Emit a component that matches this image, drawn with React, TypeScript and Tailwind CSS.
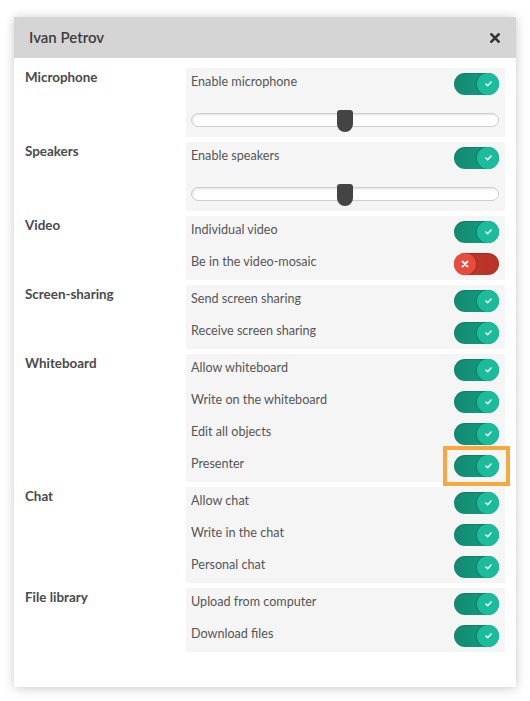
import React from "react";

type Row = { label: string; on: boolean; highlight?: boolean };
type Section = { title: string; rows: Row[]; slider?: boolean };

const sections: Section[] = [
  { title: "Microphone", rows: [{ label: "Enable microphone", on: true }], slider: true },
  { title: "Speakers", rows: [{ label: "Enable speakers", on: true }], slider: true },
  {
    title: "Video",
    rows: [
      { label: "Individual video", on: true },
      { label: "Be in the video-mosaic", on: false },
    ],
  },
  {
    title: "Screen-sharing",
    rows: [
      { label: "Send screen sharing", on: true },
      { label: "Receive screen sharing", on: true },
    ],
  },
  {
    title: "Whiteboard",
    rows: [
      { label: "Allow whiteboard", on: true },
      { label: "Write on the whiteboard", on: true },
      { label: "Edit all objects", on: true },
      { label: "Presenter", on: true, highlight: true },
    ],
  },
  {
    title: "Chat",
    rows: [
      { label: "Allow chat", on: true },
      { label: "Write in the chat", on: true },
      { label: "Personal chat", on: true },
    ],
  },
  {
    title: "File library",
    rows: [
      { label: "Upload from computer", on: true },
      { label: "Download files", on: true },
    ],
  },
];

function Toggle({ on }: { on: boolean }) {
  if (on) {
    return (
      <div className="relative h-[22px] w-[45px] rounded-full bg-gradient-to-r from-[#128a70] to-[#16a085] shadow-[inset_0_1px_1px_rgba(0,0,0,0.15)]">
        <div className="absolute right-0 top-0 flex h-[22px] w-[22px] items-center justify-center rounded-full bg-[#1abc9c] shadow-[-1px_0_2px_rgba(0,0,0,0.15)]">
          <svg width="7" height="6" viewBox="0 0 8 7" fill="none">
            <path d="M1 3.6 L3 5.5 L7 1.2" stroke="white" strokeWidth="1.7" strokeLinecap="round" strokeLinejoin="round" />
          </svg>
        </div>
      </div>
    );
  }
  return (
    <div className="relative h-[22px] w-[45px] rounded-full bg-gradient-to-r from-[#c0392b] to-[#b83227] shadow-[inset_0_1px_1px_rgba(0,0,0,0.15)]">
      <div className="absolute left-0 top-0 flex h-[22px] w-[22px] items-center justify-center rounded-full bg-[#e74c3c] shadow-[1px_0_2px_rgba(0,0,0,0.15)]">
        <svg width="8" height="8" viewBox="0 0 8 8" fill="none">
          <path d="M1.5 1.5 L6.5 6.5 M6.5 1.5 L1.5 6.5" stroke="white" strokeWidth="1.8" strokeLinecap="round" />
        </svg>
      </div>
    </div>
  );
}

function Slider() {
  return (
    <div className="pb-[5px] pt-[10px]">
      <div className="relative h-[22px]">
        <div className="absolute left-0 right-0 top-[3px] h-[14px] rounded-full border border-[#cfcfcf] bg-white shadow-[inset_1px_1px_2px_rgba(0,0,0,0.12)]" />
        <div className="absolute left-1/2 top-0 h-[22px] w-[16px] -translate-x-1/2 rounded-b-[8px] rounded-t-[3px] bg-[#444444]" />
      </div>
    </div>
  );
}

export default function App() {
  return (
    <div
      className="min-h-screen bg-white px-[14px] pt-[17px]"
      style={{ fontFamily: "Lato, 'Noto Sans', sans-serif" }}
    >
      <div className="bg-white shadow-[0_1px_10px_rgba(0,0,0,0.22)]">
        <div className="flex h-[41px] items-center justify-between bg-[#d5d5d5] pl-[15px] pr-[16px]">
          <span className="text-[15px] font-semibold text-[#3c3c3c]">Ivan Petrov</span>
          <svg width="10" height="10" viewBox="0 0 11 11" fill="none">
            <path d="M1.5 1.5 L9.5 9.5 M9.5 1.5 L1.5 9.5" stroke="#333" strokeWidth="2.8" strokeLinecap="square" />
          </svg>
        </div>
        <div className="flex flex-col gap-[5px] px-[11px] pb-[35px] pt-[10px]">
          {sections.map((s) => (
            <div key={s.title} className="flex">
              <div className="w-[161px] text-[13.4px] font-bold leading-[18px] text-[#4a4a4a]">{s.title}</div>
              <div className="flex-1 bg-[#f5f5f5] pl-[5px] pr-[6px]">
                {s.rows.map((r) => (
                  <div key={r.label} className="flex h-[32px] items-start justify-between">
                    <span className="mt-[5px] text-[12.6px] leading-[18px] text-[#555555]">{r.label}</span>
                    <div className="relative mt-[5px]">
                      <Toggle on={r.on} />
                      {r.highlight && (
                        <div className="pointer-events-none absolute -bottom-[9px] -left-[11px] -right-[11px] -top-[9px] border-[4px] border-[#f7a940]" />
                      )}
                    </div>
                  </div>
                ))}
                {s.slider && <Slider />}
              </div>
            </div>
          ))}
        </div>
      </div>
    </div>
  );
}
